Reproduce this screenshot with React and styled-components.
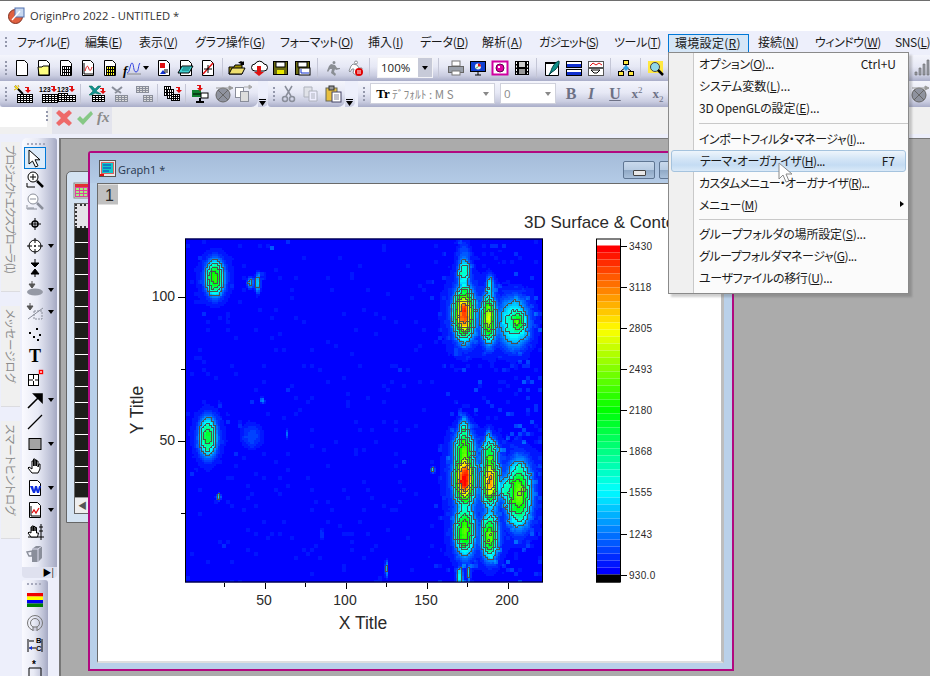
import React, {useMemo} from "react";
import styled, {createGlobalStyle} from "styled-components";

const GlobalStyle = createGlobalStyle`
  html, body { margin: 0; padding: 0; background: #ababab; }
  #root { width: 930px; height: 676px; overflow: hidden; }
  * { box-sizing: border-box; }
`;

const UI_FONT = `"Noto Sans CJK JP", "Noto Sans", sans-serif`;

/* ---------- small drawings ---------- */

const Doc = ({children}) => (
  <>
    <path d="M3.5 1.5h8l3 3v12h-11z" fill="#fff" stroke="#000" />
    {children}
  </>
);

const Grid = ({x, y, w, h, c = 4, r = 3, fill = "#fff", line = "#000"}) => {
  const cols = Array.from({length: c + 1}, (_, i) => `M${x + i * w + 0.5} ${y}v${r * h + 1}`);
  const rows = Array.from({length: r + 1}, (_, i) => `M${x} ${y + i * h + 0.5}h${c * w + 1}`);
  return (
    <>
      <rect x={x} y={y} width={c * w} height={r * h} fill={fill} />
      <path d={cols.concat(rows).join("")} stroke={line} fill="none" shapeRendering="crispEdges" />
    </>
  );
};

const RedArrow = ({x = 11, y = 1}) => (
  <path d={`M${x} ${y}h4v3h2l-3 3-3-3h2v-2h-2z`} fill="#e01010" />
);

const Floppy = ({children}) => (
  <>
    <rect x="1.5" y="2.5" width="14" height="13" fill="#6b6b10" stroke="#000" />
    <rect x="4" y="3" width="9" height="5" fill="#fff" stroke="#000" />
    {children}
  </>
);

const runner = "M10 2a1.5 1.5 0 1 1 0 3 1.5 1.5 0 1 1 0-3zM7 5l4 1 2 3 3 0v1l-4 1-1-1-1 3 2 2-1 2-4-3 1-4-2 0-2 3-1-1 2-5z";

const ICONS = {
  new: <Doc />,
  folderDoc: (
    <Doc>
      <path d="M3 8h4l1-1h6v9H4z" fill="#ffff80" stroke="#000" />
    </Doc>
  ),
  wks: (
    <Doc>
      <Grid x={5} y={7} w={2} h={3} c={4} r={3} fill="#fff" />
    </Doc>
  ),
  graphDoc: (
    <Doc>
      <path d="M5 4v11h9" stroke="#000" fill="none" />
      <path d="M6 12c2-7 3-5 4-2s2 1 3-2" stroke="#e01010" fill="none" />
    </Doc>
  ),
  matrix: (
    <Doc>
      <Grid x={5} y={7} w={2} h={3} c={4} r={3} fill="#ffff20" />
    </Doc>
  ),
  fx: (
    <>
      <path d="M4 14c3 0 3-10 5-10s1 9 4 9 2-7 4-9" stroke="#3040e0" fill="none" />
      <path d="M4 15h14" stroke="#888" />
      <text x="0" y="16" fontFamily="Liberation Serif" fontStyle="italic" fontWeight="700" fontSize="13">f</text>
    </>
  ),
  layout: (
    <Doc>
      <rect x="5" y="4" width="5" height="5" fill="#e01010" />
      <path d="M5 15l3-4 3 4z" fill="#1030d0" />
      <path d="M9 13h4M9 11h4" stroke="#000" />
    </Doc>
  ),
  notes: (
    <Doc>
      <path d="M1 14l4-7h11l-4 7z" fill="#40d0d0" stroke="#000" />
      <path d="M5 11h7M6 9h7" stroke="#107070" />
    </Doc>
  ),
  image: (
    <Doc>
      <path d="M4 15L14 4" stroke="#e01010" strokeWidth="1.5" />
      <path d="M9 6v8M5 10h8" stroke="#000" />
    </Doc>
  ),
  open: (
    <>
      <path d="M1 8h5l1-2h7v9H1z" fill="#a09000" stroke="#000" />
      <path d="M1 15l3-6h13l-3 6z" fill="#f0e070" stroke="#000" />
      <path d="M10 4c2-2 4-2 5-1l1-1v4h-4l1-1c-1-1-2-1-3-1z" fill="#000" />
    </>
  ),
  cloud: (
    <>
      <path d="M5 12a3.5 3.5 0 0 1 0-7 5 5 0 0 1 9 0 3.5 3.5 0 0 1 0 7z" fill="#fff" stroke="#000" />
      <path d="M7 7h4v6h3l-5 4-5-4h3z" fill="#e01010" />
    </>
  ),
  save: (
    <Floppy>
      <rect x="5" y="11" width="7" height="4" fill="#e8e800" />
    </Floppy>
  ),
  saveAs: (
    <Floppy>
      <rect x="5" y="9" width="11" height="7" fill="#fff" stroke="#000" />
      <path d="M7 10v4h8" stroke="#1030d0" fill="none" />
    </Floppy>
  ),
  run: <path d={runner} fill="#8a8e94" />,
  stop: (
    <>
      <path d={runner} fill="#fff" stroke="#8a8e94" />
      <circle cx="13" cy="13" r="4" fill="#e00000" />
      <path d="M12 11v4M14 11v4" stroke="#fff" />
    </>
  ),
  printer: (
    <>
      <rect x="5" y="2" width="8" height="5" fill="#fff" stroke="#777" />
      <rect x="1.5" y="7.5" width="15" height="6" fill="#9aa0aa" stroke="#666" />
      <rect x="5" y="12" width="8" height="4" fill="#fff" stroke="#777" />
    </>
  ),
  present: (
    <>
      <rect x="1.5" y="2.5" width="15" height="10" fill="#1040d0" stroke="#000" />
      <circle cx="9" cy="7.5" r="3" fill="#f0f0f0" />
      <path d="M9 7.5V4.5a3 3 0 0 1 3 3z" fill="#e01010" />
      <path d="M9 7.5l-2 2" stroke="#10a010" />
      <path d="M9 13v3M6 16h6" stroke="#000" />
    </>
  ),
  pink: (
    <>
      <rect x="1.5" y="2.5" width="15" height="13" fill="#fff" stroke="#d000a0" strokeWidth="2" />
      <circle cx="9" cy="9" r="4" fill="#e000a0" stroke="#600050" />
      <rect x="7" y="7" width="2" height="2" fill="#fff" />
    </>
  ),
  film: (
    <>
      <rect x="2" y="2" width="14" height="14" fill="#000" />
      <rect x="6" y="3" width="6" height="5" fill="#ccc" />
      <rect x="6" y="10" width="6" height="5" fill="#999" />
      <path d="M3.5 3v12M14.5 3v12" stroke="#fff" strokeDasharray="2 1.5" />
    </>
  ),
  pen: (
    <>
      <path d="M2.5 3.5h13v13h-13z" fill="#fff" stroke="#000" />
      <path d="M2 3h14v2H2z" fill="#000" />
      <path d="M16 2c1 4-3 9-7 11l-3 3 2-4C9 8 12 3 16 2z" fill="#10908a" stroke="#044" />
    </>
  ),
  bars: (
    <>
      <rect x="1.5" y="2.5" width="15" height="6" fill="#fff" stroke="#000" />
      <rect x="2" y="5" width="14" height="3" fill="#1030d0" />
      <rect x="1.5" y="10.5" width="15" height="6" fill="#fff" stroke="#000" />
      <rect x="2" y="13" width="14" height="3" fill="#1030d0" />
    </>
  ),
  graphs: (
    <>
      <rect x="1.5" y="2.5" width="15" height="6" fill="#fff" stroke="#555" />
      <path d="M3 7l3-3 3 2 3-2 3 2" stroke="#e01010" fill="none" />
      <rect x="1.5" y="9.5" width="15" height="7" fill="#fff" stroke="#555" />
      <path d="M4 11h9l-3 3H7z" fill="none" stroke="#000" />
    </>
  ),
  tree: (
    <>
      <path d="M9 5v3M4 12L9 8l5 4" stroke="#000" fill="none" />
      <rect x="6.5" y="1.5" width="5" height="4" fill="#ffe840" stroke="#000" />
      <path d="M9 6l3 3-3 3-3-3z" fill="#30a0e0" />
      <rect x="1.5" y="12.5" width="5" height="4" fill="#ffe840" stroke="#000" />
      <rect x="11.5" y="12.5" width="5" height="4" fill="#ffe840" stroke="#000" />
    </>
  ),
  magnify: (
    <>
      <rect x="1" y="2" width="15" height="12" fill="#ffe840" />
      <circle cx="8" cy="8" r="4.5" fill="#90d8e8" stroke="#444" />
      <path d="M11 11l5 5" stroke="#000" strokeWidth="2.5" />
    </>
  ),
  steps: (
    <path d="M2 16h2v-3H2zM6 16h2V9H6zM10 16h2V5h-2zM14 16h2V1h-2z" fill="#9a9ea8" stroke="#666" strokeWidth=".6" />
  ),
  wand: (
    <>
      <Grid x={3} y={9} w={3} h={2} c={5} r={4} fill="#fff" />
      <path d="M1 1l8 8" stroke="#000" strokeWidth="2" />
      <path d="M1 1l3 3" stroke="#ffe020" strokeWidth="2" />
      <path d="M4 0l1 2M0 5l2-1" stroke="#e0b000" />
      <RedArrow x={11} y={2} />
    </>
  ),
  num: (
    <>
      <text x="0" y="7" fontFamily="Liberation Sans" fontWeight="700" fontSize="7">123</text>
      <RedArrow x={12} y={1} />
      <Grid x={3} y={9} w={3} h={2} c={5} r={4} fill="#fff" />
    </>
  ),
  num2: (
    <>
      <text x="0" y="7" fontFamily="Liberation Sans" fontWeight="700" fontSize="7">123</text>
      <RedArrow x={12} y={1} />
      <Grid x={1} y={8} w={3} h={2} c={3} r={4} fill="#fff" />
      <Grid x={9} y={10} w={3} h={2} c={3} r={3} fill="#fff" />
    </>
  ),
  xTable: (
    <>
      <path d="M1 1h3l3 3 3-3h3L8 6l5 3h-3L7 8 4 10H1l4-4z" fill="#109090" stroke="#064" strokeWidth=".5" />
      <RedArrow x={12} y={3} />
      <Grid x={4} y={10} w={3} h={2} c={4} r={3} fill="#fff" />
    </>
  ),
  xTableGray: (
    <>
      <path d="M1 2l5 4 5-4M4 8l3-2 3 2" stroke="#8a8e9a" strokeWidth="2" fill="none" />
      <Grid x={4} y={10} w={3} h={2} c={4} r={3} fill="#ddd" line="#8a8e9a" />
    </>
  ),
  tableGray: (
    <>
      <Grid x={1} y={1} w={3} h={2} c={4} r={3} fill="#ddd" line="#8a8e9a" />
      <Grid x={8} y={10} w={3} h={2} c={3} r={3} fill="#ddd" line="#8a8e9a" />
    </>
  ),
  tables: (
    <>
      <Grid x={1} y={1} w={2} h={3} c={3} r={3} fill="#fff" />
      <Grid x={4} y={4} w={2} h={3} c={3} r={3} fill="#fff" />
      <Grid x={8} y={9} w={2} h={2} c={4} r={3} fill="#fff" />
      <RedArrow x={13} y={2} />
    </>
  ),
  plug: (
    <>
      <rect x="1" y="5" width="9" height="7" fill="#108030" />
      <rect x="10" y="8" width="7" height="5" fill="#fff" stroke="#000" />
      <path d="M2 9h8" stroke="#000" />
      <path d="M9 13v3M5 17h8" stroke="#000" strokeWidth="2" />
      <RedArrow x={6} y={0} />
    </>
  ),
  disc: (
    <>
      <circle cx="8" cy="10" r="7" fill="#8f939f" stroke="#666" />
      <path d="M3 5l10 10M13 5L3 15" stroke="#666" />
      <path d="M1 3h13M14 1l4 2-4 2z" fill="#999" stroke="#999" />
    </>
  ),
  copyGray: (
    <>
      <rect x="1.5" y="2.5" width="8" height="10" fill="#fff" stroke="#8a8e9a" />
      <rect x="6.5" y="6.5" width="8" height="10" fill="#ddd" stroke="#8a8e9a" />
      <path d="M10 2h5M15 0l3 2-3 2z" fill="#aaa" stroke="#aaa" />
    </>
  ),
  cut: (
    <>
      <path d="M5 1l6 10M12 1L6 11" stroke="#8a8e9a" strokeWidth="1.5" />
      <circle cx="5" cy="14" r="2.5" fill="none" stroke="#8a8e9a" strokeWidth="1.5" />
      <circle cx="12" cy="14" r="2.5" fill="none" stroke="#8a8e9a" strokeWidth="1.5" />
    </>
  ),
  copy: (
    <>
      <path d="M2 2h8v10H2z" fill="#e0e2e8" stroke="#aeb2bc" />
      <path d="M7 6h8v10H7z" fill="#eef" stroke="#aeb2bc" />
      <path d="M9 9h4M9 11h4M9 13h4" stroke="#aeb2bc" />
    </>
  ),
  paste: (
    <>
      <rect x="2" y="3" width="11" height="13" fill="#e8c040" stroke="#665" />
      <rect x="5" y="1" width="5" height="4" fill="#999" stroke="#333" />
      <rect x="8" y="7" width="9" height="10" fill="#fff" stroke="#446" />
      <path d="M10 10h5M10 12h5M10 14h5" stroke="#889" />
    </>
  ),
  cancel: <path d="M1 4l3-3 5 4 5-4 3 3-5 5 5 5-3 3-5-4-5 4-3-3 5-5z" fill="#ee6a6a" />,
  accept: <path d="M1 10l3-3 3 3 8-8 2 3-10 11z" fill="#86c886" />,
  pointer: <path d="M3 1v14l3.5-3 3 6 2.5-1.2-3-6H14z" fill="#fff" stroke="#000" />,
  zoomIn: (
    <>
      <circle cx="7" cy="6" r="5" fill="#fff" stroke="#000" />
      <path d="M4 6h6M7 3v6" stroke="#000" />
      <path d="M11 10l6 6" stroke="#000" strokeWidth="2.5" />
      <path d="M1 12v4h8" stroke="#000" fill="none" />
    </>
  ),
  zoomOut: (
    <>
      <circle cx="7" cy="6" r="5" fill="#fff" stroke="#8a8e9a" />
      <path d="M4 6h6" stroke="#8a8e9a" />
      <path d="M11 10l6 6" stroke="#8a8e9a" strokeWidth="2.5" />
      <path d="M1 12v4h10M3 14v2M5 14v2M7 14v2" stroke="#8a8e9a" fill="none" />
    </>
  ),
  cross: (
    <>
      <circle cx="9" cy="9" r="3" fill="none" stroke="#000" strokeWidth="1.5" />
      <path d="M9 3v12M3 9h12" stroke="#000" />
    </>
  ),
  target: (
    <>
      <circle cx="9" cy="9" r="6" fill="#fff" stroke="#000" />
      <circle cx="9" cy="9" r="1" fill="#000" />
      <path d="M9 1v5M9 12v5M1 9h5M12 9h5" stroke="#000" />
    </>
  ),
  pinch: <path d="M9 0v5M5 4h8l-4 4zM5 15h8L9 10zM9 15v3" fill="#000" stroke="#000" />,
  ellipse: (
    <>
      <path d="M6 0v6M3 3h6L6 7z" fill="#555" stroke="#555" />
      <ellipse cx="9" cy="11" rx="8" ry="3.5" fill="#9599a5" />
    </>
  ),
  ellipseLine: (
    <>
      <path d="M4 0v5M1 3h6L4 7z" fill="#555" stroke="#555" />
      <path d="M2 16L17 5" stroke="#8a8e9a" />
      <rect x="8" y="8" width="8" height="8" fill="none" stroke="#8a8e9a" strokeDasharray="2 1" />
    </>
  ),
  dots: <path d="M10 3h2v2h-2zM3 7h2v2H3zM13 9h2v2h-2zM7 11h2v2H7zM11 14h2v2h-2z" fill="#000" />,
  addBox: (
    <>
      <rect x="2.5" y="5.5" width="10" height="11" fill="#fff" stroke="#000" />
      <path d="M7.5 6v4M7.5 12v4M3 11h4M9 11h4" stroke="#000" />
      <rect x="13.5" y="1.5" width="3" height="3" fill="#fff" stroke="#f00" strokeWidth="1.4" />
    </>
  ),
  arrow: <path d="M2 17L14 5M8 3h8v8z" stroke="#000" strokeWidth="1.6" fill="#000" />,
  line: <path d="M2 16L16 2" stroke="#000" strokeWidth="1.3" />,
  rect: <rect x="3" y="3.5" width="12" height="11" fill="#a4a4a4" stroke="#000" />,
  hand: (
    <path d="M6 16l-4-5 1-1 3 2V4h1.5v5V2H9v7V3h1.5v6V4H12v6l1-3h1v5l-2 4z" fill="#fff" stroke="#000" strokeLinejoin="round" />
  ),
  wordDoc: (
    <Doc>
      <rect x="4" y="5" width="10" height="11" fill="#fff" />
      <path d="M4 7h3l1 4 1-4h2l1 4 1-4h2l-2 7h-2l-1-3-1 3H7z" fill="#1030e0" />
    </Doc>
  ),
  chartDoc: (
    <Doc>
      <path d="M5 5v10h9" stroke="#000" fill="none" />
      <path d="M6 12l2-3 2 3 3-5" stroke="#e01010" fill="none" strokeWidth="1.3" />
    </Doc>
  ),
  handGrid: (
    <>
      <path d="M15 1v16M2 14h16M13 4h4M13 8h4" stroke="#000" />
      <path d="M5 14l-3-4 1-1 2 1V4h1v4V3h1.5v5V3.500H9V8V4.500h1.500V10h2l-1 4z" fill="#fff" stroke="#000" />
    </>
  ),
  cube: (
    <>
      <path d="M6 4l4-3h6v12l-4 4H6z" fill="#8a8e9a" />
      <path d="M6 4h6v13M12 4l4-3" stroke="#dde" fill="none" />
      <path d="M1 7l5-1v5H3z" fill="none" stroke="#8a8e9a" strokeWidth="1.4" />
    </>
  ),
  colorBars: (
    <>
      <rect x="1" y="1" width="16" height="3.500" fill="#f00000" />
      <rect x="1" y="4.500" width="16" height="3.500" fill="#ffff00" />
      <rect x="1" y="8" width="16" height="3.500" fill="#0000f0" />
      <rect x="1" y="11.500" width="16" height="3.500" fill="#008000" />
    </>
  ),
  ring: (
    <>
      <circle cx="9" cy="9" r="7.500" fill="none" stroke="#777" />
      <circle cx="9" cy="9" r="4.500" fill="none" stroke="#777" />
      <path d="M7 17v-4h4v4" fill="#ccd" stroke="#777" />
    </>
  ),
  swap: (
    <>
      <path d="M2 3v13M16 3v13" stroke="#000" />
      <path d="M3 5h5M3 12h7" stroke="#000" />
      <text x="10" y="7" fontFamily="Liberation Sans" fontWeight="700" fontSize="7.500">B</text>
      <text x="10" y="15" fontFamily="Liberation Sans" fontWeight="700" fontSize="7.500">C</text>
      <path d="M3 12l3-2v4z" fill="#1030e0" />
    </>
  ),
  star: (
    <>
      <path d="M3 10h12M3 10v8M15 10v8" stroke="#000" fill="none" />
      <text x="6" y="10" fontFamily="Liberation Sans" fontWeight="700" fontSize="10">*</text>
    </>
  ),
  appLogo: (
    <>
      <circle cx="7.500" cy="9.500" r="7" fill="#e06040" stroke="#803020" />
      <rect x="7" y="1" width="9" height="9" fill="#c8d8f0" stroke="#5070b0" />
      <path d="M4 13L12 4" stroke="#fff" strokeWidth="1.400" />
    </>
  ),
  sheetLogo: (
    <>
      <rect x="0" y="1" width="18" height="15" fill="#e8f0e0" stroke="#888" />
      <rect x="1" y="2" width="16" height="3" fill="#e03030" />
      <Grid x={1} y={5} w={4} h={3} c={4} r={3} fill="#a0f080" line="#e040a0" />
    </>
  ),
  graphLogo: (
    <>
      <rect x="0.500" y="0.500" width="16" height="16" fill="#e8e8e8" stroke="#555" />
      <rect x="2.500" y="2.500" width="12" height="11" fill="#10c8c8" stroke="#e06060" />
      <path d="M4 5h8M4 8h8M4 11h6" stroke="#1030c0" />
      <rect x="1" y="14" width="4" height="2" fill="#e01010" />
    </>
  ),
};

const IconSvg = styled.svg`
  display: block;
  flex: none;
  width: 18px;
  height: 18px;
  overflow: visible;
`;

const Icon = ({name}) => <IconSvg viewBox="0 0 18 18">{ICONS[name]}</IconSvg>;

/* ---------- window chrome ---------- */

const Shell = styled.div`
  width: 930px;
  height: 676px;
  display: flex;
  flex-direction: column;
  border-top: 1px solid #6e6e6e;
  background: #edeffb;
  font-family: ${UI_FONT};
  font-size: 12px;
  font-feature-settings: "palt";
  color: #1a1a1a;
  position: relative;
  overflow: hidden;
`;

const TitleBar = styled.div`
  height: 30px;
  flex: none;
  display: flex;
  align-items: center;
  gap: 4px;
  padding: 0 0 1px 8px;
  background: #fff;
  font-family: "Open Sans", sans-serif;
  font-size: 11.200px;
  color: #333;
`;

const MenuBar = styled.div`
  height: 24px;
  flex: none;
  display: flex;
  align-items: center;
  background: #edeffb;
  padding-left: 5px;
`;

const Grip = styled.div`
  flex: none;
  width: 2px;
  height: ${(p) => p.$h || 14}px;
  margin-left: ${(p) => p.$ml ?? 0}px;
  margin-right: ${(p) => p.$mr ?? 0}px;
  margin-top: ${(p) => p.$mt ?? 0}px;
  background: repeating-linear-gradient(to bottom, #9498ac 0 2px, transparent 2px 4px);
`;

const GripRow = styled.div`
  width: ${(p) => p.$w || 20}px;
  height: 2px;
  margin: ${(p) => p.$m || "5px 0 2px 5px"};
  background: repeating-linear-gradient(to right, #a6a9bc 0 2px, transparent 2px 4px);
`;

const MenuItem = styled.div`
  flex: none;
  width: ${(p) => p.$w}px;
  height: ${(p) => (p.$active ? 19 : 24)}px;
  line-height: ${(p) => (p.$active ? 16 : 22)}px;
  padding-left: ${(p) => (p.$active ? 6 : 8)}px;
  white-space: nowrap;
  letter-spacing: ${(p) => p.$ls || 0}px;
  border: ${(p) => (p.$active ? "1px solid #0078d7" : "none")};
  background: ${(p) => (p.$active ? "#d5e6f7" : "transparent")};
  margin: ${(p) => (p.$active ? "0 1px" : "0")};
`;

const Bands = styled.div`
  height: ${(p) => p.$h}px;
  flex: none;
  display: flex;
  background: #edeffb;
  overflow: hidden;
`;

const Band = styled.div`
  flex: ${(p) => (p.$grow ? "1 1 0" : "none")};
  min-width: 0;
  display: flex;
  align-items: center;
  padding: 0 ${(p) => p.$pr ?? 0}px 1px ${(p) => p.$pl ?? 5}px;
  background: linear-gradient(to bottom, #f4f5fc 0%, #e6e8f5 45%, #c9cce0 80%, #a9adc8 100%);
  border-radius: 0 0 ${(p) => (p.$square ? 0 : 7)}px ${(p) => (p.$square ? 0 : 3)}px;
`;

const Chevron = styled.div`
  width: 10px;
  flex: none;
  position: relative;
  background: linear-gradient(to bottom, #edeffb 60%, #c6c9de 100%);
  border-radius: 0 0 5px 0;
  margin-right: ${(p) => p.$mr ?? 0}px;
  &::after {
    content: "";
    position: absolute;
    left: 1px;
    bottom: 1px;
    width: 7px;
    height: 6px;
    border-top: 1px solid #000;
    background: linear-gradient(to bottom, transparent 1px, #000 1px) no-repeat;
    clip-path: polygon(0 0, 100% 0, 100% 30%, 50% 100%, 0 30%);
  }
`;

const Tool = styled.div`
  flex: none;
  width: ${(p) => p.$w || 22}px;
  height: 24px;
  display: flex;
  align-items: center;
  justify-content: ${(p) => (p.$caret ? "flex-start" : "center")};
  padding-left: ${(p) => (p.$caret ? 2 : 0)}px;
  gap: 2px;
  margin-left: ${(p) => (p.$end ? "auto" : "0")};
  margin-right: ${(p) => p.$mr ?? 0}px;
`;

const Caret = styled.span`
  flex: none;
  width: 0;
  height: 0;
  border-left: 3.5px solid transparent;
  border-right: 3.5px solid transparent;
  border-top: 4px solid ${(p) => p.$color || "#000"};
`;

const Sep = styled.div`
  flex: none;
  width: ${(p) => p.$w || 8}px;
  height: 20px;
  position: relative;
  &::after {
    content: "";
    position: absolute;
    left: ${(p) => Math.floor(((p.$w || 8) - 1) / 2)}px;
    top: 0;
    bottom: 0;
    width: 1px;
    background: #c4c6d6;
  }
`;

const Combo = styled.div`
  flex: none;
  width: ${(p) => p.$w}px;
  height: 21px;
  margin: 0 ${(p) => p.$mr ?? 0}px 0 ${(p) => p.$ml ?? 0}px;
  display: flex;
  align-items: center;
  background: #fff;
  border: 1px solid ${(p) => (p.$flat ? "#f2f2f6" : "#cfd1dc")};
  color: ${(p) => (p.$dim ? "#8a8a8a" : "#222")};
  padding-left: 3px;
  font-family: ${(p) => (p.$cjk ? UI_FONT : `"Open Sans", sans-serif`)};
  font-size: 11.500px;
  white-space: nowrap;
  overflow: hidden;
`;

const ComboText = styled.span`
  flex: 1 1 0;
  min-width: 0;
  overflow: hidden;
`;

const ComboArrow = styled.span`
  flex: none;
  align-self: stretch;
  width: ${(p) => p.$w || 14}px;
  display: flex;
  align-items: center;
  justify-content: center;
  background: ${(p) => p.$bg || "transparent"};
`;

const Fmt = styled.span`
  flex: none;
  width: ${(p) => p.$w}px;
  margin-left: ${(p) => p.$ml ?? 0}px;
  text-align: center;
  font-family: "Liberation Serif", serif;
  font-size: ${(p) => p.$size || 15}px;
  font-weight: 700;
  font-style: ${(p) => (p.$italic ? "italic" : "normal")};
  text-decoration: ${(p) => (p.$under ? "underline" : "none")};
  color: ${(p) => p.$color || "#6d7185"};
  sup, sub { font-size: 9px; font-weight: 400; line-height: 0; }
`;

const FormulaRow = styled.div`
  height: 27px;
  flex: none;
  display: flex;
  align-items: flex-start;
  background: #f0f0f0;
`;

const FormulaInput = styled.div`
  width: 47px;
  height: 20px;
  background: #fff;
`;

const FormulaTools = styled.div`
  width: 60px;
  height: 27px;
  margin-left: 4px;
  display: flex;
  align-items: center;
  justify-content: space-around;
  padding: 0 1px 6px;
  background: #e3e4ed;
  font-family: "Liberation Serif", serif;
  font-style: italic;
  font-weight: 700;
  font-size: 15px;
  color: #8a8a8a;
`;

const Strip = styled.div`
  height: 4px;
  flex: none;
  background: #edeffb;
`;

const Body = styled.div`
  flex: 1 1 0;
  min-height: 0;
  display: flex;
`;

const TabColumn = styled.div`
  width: 22px;
  flex: none;
  display: flex;
  flex-direction: column;
  gap: 14px;
  padding: 4px 2px 0 1px;
`;

const DockTab = styled.div`
  height: ${(p) => p.$h}px;
  flex: none;
  background: #f0f0f0;
  border-bottom: 1px solid #dcdce0;
  color: #8c8c8c;
  font-size: 11.500px;
  line-height: 18px;
  letter-spacing: ${(p) => p.$ls || 0}px;
  padding-top: 3px;
  writing-mode: vertical-rl;
  text-orientation: sideways;
  white-space: nowrap;
`;

const ToolColumn = styled.div`
  width: 37px;
  flex: none;
  display: flex;
  flex-direction: column;
`;

const ToolPanel = styled.div`
  width: ${(p) => p.$w}px;
  background: linear-gradient(to right, #fafaff 0%, #e8eaf5 45%, #b9bdd3 85%, #a4a8c2 100%);
  border-radius: ${(p) => (p.$open ? "3px 3px 0 0" : "5px 3px 0 0")};
  padding-bottom: ${(p) => (p.$open ? 0 : 2)}px;
  flex: ${(p) => (p.$open ? "1 1 0" : "none")};
  overflow: hidden;
`;

const ToolRow = styled.div`
  height: 22px;
  display: flex;
  align-items: center;
  padding-left: 4px;
  gap: 4px;
`;

const Selected = styled.div`
  width: 22px;
  height: 22px;
  margin-left: -2px;
  display: flex;
  align-items: center;
  justify-content: center;
  background: #dcebfa;
  border: 1px solid #0078d7;
`;

const Expander = styled.div`
  width: 35px;
  height: 11px;
  margin-bottom: 2px;
  display: flex;
  align-items: center;
  justify-content: flex-end;
  padding-right: 3px;
  background: #dfe1ef;
  border-radius: 0 0 4px 4px;
  font-size: 9px;
  line-height: 1;
  color: #000;
`;

const Desktop = styled.div`
  flex: 1 1 0;
  position: relative;
  background: #ababab;
  border-top: 1px solid #777;
  border-left: 2px solid #777;
  overflow: hidden;
`;

const SheetWindow = styled.div`
  position: absolute;
  left: 5px;
  top: 32px;
  width: 110px;
  height: 352px;
  background: #d4e3f2;
  border: 1px solid #666;
  border-radius: 5px 0 0 0;
  padding: 10px 0 8px 7px;
  display: flex;
  flex-direction: column;
`;

const SheetGrid = styled.div`
  flex: 1 1 0;
  margin-top: 3px;
  border: 1px solid #666;
  background: repeating-linear-gradient(to bottom, #1e1e1a 0 15px, #fff 15px 16px);
  background-position: 0 7px;
  display: flex;
  flex-direction: column;
  justify-content: space-between;
`;

const SheetCorner = styled.div`
  height: 24px;
  background: #e4e4e8;
  border: 2px dotted #333;
`;

const SheetScroll = styled.div`
  height: 16px;
  background: #eee;
  color: #555;
  font-size: 9px;
  line-height: 16px;
  padding-left: 3px;
  border-top: 1px solid #999;
`;

const GraphWindow = styled.div`
  position: absolute;
  left: 27px;
  top: 12px;
  width: 646px;
  height: 520px;
  display: flex;
  flex-direction: column;
  background: #b9d0e9;
  border: 2px solid #b1087f;
  border-radius: 3px 0 0 0;
  padding: 0 8px 6px 7px;
`;

const GraphTitle = styled.div`
  height: 30px;
  flex: none;
  margin: 0 -8px 0 -7px;
  padding: 2px 0 0 9px;
  display: flex;
  align-items: center;
  gap: 1px;
  background: linear-gradient(to bottom, #a5bcd9 0%, #b4cbe6 100%);
  font-family: "Open Sans", sans-serif;
  font-size: 11px;
  color: #26364d;
  position: relative;
`;

const CaptionButton = styled.div`
  position: absolute;
  left: ${(p) => p.$left}px;
  top: 8px;
  width: 32px;
  height: 18px;
  border: 1px solid #5f7693;
  border-radius: 2px;
  background: linear-gradient(to bottom, #c9d9ec 0%, #b7cbe2 50%, #90a9c6 52%, #a9c0da 100%);
  &::after {
    content: "";
    position: absolute;
    left: 9px;
    top: 8px;
    width: 11px;
    height: 4px;
    background: #e8e8e8;
    border: 1px solid #444;
    border-radius: 1px;
  }
`;

const GraphClient = styled.div`
  flex: 1 1 0;
  min-height: 0;
  background: #fff;
  border-left: 1px solid #6a6a6a;
  border-top: 1px solid #6a6a6a;
  border-right: 3px solid #bdbdbd;
  border-bottom: 2px solid #dedede;
`;

const PageSvg = styled.svg`
  display: block;
  width: 100%;
  height: 100%;
  font-family: "Liberation Sans", sans-serif;
  fill: #2a2a2a;
`;

/* ---------- the open menu ---------- */

const Menu = styled.div`
  position: absolute;
  left: 668px;
  top: 51px;
  width: 241px;
  padding: 0 0 4px;
  background: linear-gradient(to right, #f0f0f0 0 24px, #c9c9c9 24px 25px, #fbfbfb 25px);
  border: 1px solid #8a8a8a;
  box-shadow: 3px 3px 2px rgba(60, 60, 60, 0.25);
`;

const Row = styled.div`
  height: 22px;
  display: flex;
  align-items: center;
  justify-content: space-between;
  padding: 0 12px 2px 30px;
  white-space: nowrap;
  position: relative;
  letter-spacing: ${(p) => p.$ls || 0}px;
  ${(p) =>
    p.$hot &&
    `
    margin: 0 2px;
    padding: 0 10px 2px 28px;
    border: 1px solid #a5c3de;
    border-radius: 3px;
    background: linear-gradient(to bottom, #eef5fc 0%, #d3e5f6 40%, #c4dcf3 70%, #d9e9f8 100%);
  `}
`;

const Shortcut = styled.span`
  letter-spacing: 0;
`;

const RowSep = styled.div`
  height: ${(p) => p.$h}px;
  margin-left: 30px;
  display: flex;
  align-items: center;
  &::after {
    content: "";
    flex: 1;
    height: 1px;
    background: #c9c9c9;
  }
`;

const SubArrow = styled.span`
  position: absolute;
  right: 4px;
  top: 7px;
  width: 0;
  height: 0;
  border-top: 3.500px solid transparent;
  border-bottom: 3.500px solid transparent;
  border-left: 4px solid #000;
`;

const Cursor = styled.svg`
  position: absolute;
  left: 778px;
  top: 160px;
  width: 16px;
  height: 24px;
`;

const Mn = ({t, k, tail = ""}) => (
  <span>
    {t}(<u>{k}</u>){tail}
  </span>
);

/* ---------- chart data ---------- */

const PEAKS = [
  [215, 277, 6.5, 12.5, 1350],
  [258, 282, 1.8, 7, 600],
  [250.5, 282, 2.5, 4, 480],
  [464.5, 313, 7, 17, 2350],
  [464, 272, 4.5, 11, 750],
  [489, 318, 5.2, 16, 1700],
  [490, 285, 2.8, 8, 600],
  [514, 322, 11, 18, 800],
  [519, 321, 5, 8, 1050],
  [208, 436, 6.5, 14, 1100],
  [252, 435, 8, 9, 180],
  [465, 478, 7, 18, 2500],
  [464.5, 448, 7, 12, 1300],
  [464, 430, 4, 9, 750],
  [465, 530, 7, 17, 1450],
  [490.5, 480, 5.8, 17, 2100],
  [490, 452, 5.5, 10, 1050],
  [488.5, 436, 2.2, 6, 500],
  [490, 535, 6, 16, 1400],
  [519, 493, 8.5, 22, 1500],
  [505, 488, 4, 9, 650],
  [460, 576, 2.3, 7, 650],
  [469, 572, 1.3, 6, 550],
  [219, 496, 1.5, 2.5, 560],
  [433, 469, 1.5, 2, 600],
  [386.5, 568, 1, 6, 500],
  [322, 533, 1, 5, 200],
  [262, 399, 1, 2, 500],
  [272, 247, 1.2, 1.2, 450],
  [287, 433, 1, 3, 300],
  [464, 255, 5, 12, 200],
];

const BANDS = 47;
const LEVELS = [1350, 1630, 1910, 2190, 2470, 2750, 3030];

function bandColor(i) {
  const s = (i / (BANDS - 1)) * 4;
  const ramp = (v) => Math.round(Math.max(0, Math.min(1, v)) * 255);
  if (s < 1) return `rgb(0,${ramp(s)},255)`;
  if (s < 2) return `rgb(0,255,${ramp(2 - s)})`;
  if (s < 3) return `rgb(${ramp(s - 2)},255,0)`;
  return `rgb(255,${ramp(4 - s)},0)`;
}

// seeded so the picture is the same on every load
function rng(seed) {
  let a = seed;
  return () => {
    a = (a + 0x6d2b79f5) | 0;
    let t = Math.imul(a ^ (a >>> 15), 1 | a);
    t = (t + Math.imul(t ^ (t >>> 7), 61 | t)) ^ t;
    return ((t ^ (t >>> 14)) >>> 0) / 4294967296;
  };
}

function buildHeatmap() {
  const X0 = 186;
  const Y0 = 239;
  const STEP = 2;
  const nx = 178;
  const ny = 171;
  const rand = rng(20220);
  const blocks = Array.from({length: (ny >> 1) + 2}, () =>
    Array.from({length: (nx >> 1) + 2}, () => rand())
  );
  const field = [];
  for (let j = 0; j < ny; j++) {
    const row = [];
    for (let i = 0; i < nx; i++) {
      const x = X0 + i * STEP + 1;
      const y = Y0 + j * STEP + 1;
      const n = blocks[j >> 1][i >> 1];
      let peak = 0;
      for (const [cx, cy, sx, sy, amp] of PEAKS) {
        const dx = x - cx;
        const dy = y - cy;
        // slightly flat-topped, the measured spots are not pure gaussians
        const r2 = dx * dx / (sx * sx) + dy * dy / (sy * sy);
        const v = amp * Math.exp(-0.5 * Math.pow(r2, 1.2));
        const halo = amp * 0.13 * Math.exp(-0.5 * (dx * dx / (sx * sx * 3.2) + dy * dy / (sy * sy * 2)));
        peak += v * v + halo * halo;
      }
      peak = Math.sqrt(peak);
      const side = x > 440 ? Math.min(1, (x - 440) / 20) : 0;
      const speck = Math.pow(n, 20) * 100 + side * Math.pow(n, 8) * 110;
      row.push(940 + speck + peak * (0.96 + n * 0.08));
    }
    field.push(row);
  }

  const fills = Array.from({length: BANDS}, () => "");
  for (let j = 0; j < ny; j++) {
    let i = 0;
    while (i < nx) {
      const b = Math.max(0, Math.min(BANDS - 1, Math.floor(((field[j][i] - 930) / 2500) * BANDS)));
      let end = i + 1;
      while (end < nx && Math.floor(((field[j][end] - 930) / 2500) * BANDS) === b) end++;
      fills[b] += `M${X0 + i * STEP} ${Y0 + j * STEP}h${(end - i) * STEP}v${STEP}h-${(end - i) * STEP}z`;
      i = end;
    }
  }

  let contour = "";
  for (const level of LEVELS) {
    for (let j = 0; j < ny; j++) {
      for (let i = 0; i < nx; i++) {
        const on = field[j][i] >= level;
        if (i + 1 < nx && on !== field[j][i + 1] >= level) {
          contour += `M${X0 + (i + 1) * STEP - 0.5} ${Y0 + j * STEP}v${STEP}`;
        }
        if (j + 1 < ny && on !== field[j + 1][i] >= level) {
          contour += `M${X0 + i * STEP} ${Y0 + (j + 1) * STEP - 0.5}h${STEP}`;
        }
      }
    }
  }
  return {fills, contour};
}

const X_MAJOR = [[265, "50"], [346, "100"], [427, "150"], [508, "200"]];
const X_MINOR = [224.5, 305.5, 386.5, 467.5];
const LEGEND = [
  [245, "3430"], [286, "3118"], [327, "2805"], [368, "2493"], [409, "2180"],
  [450, "1868"], [491, "1555"], [533, "1243"], [574, "930.0"],
];

function GraphPage() {
  const {fills, contour} = useMemo(buildHeatmap, []);
  return (
    <PageSvg viewBox="98 184 623 476">
      <rect x="98" y="184" width="20" height="20" fill="#c0c0c0" />
      <text x="105" y="200" fontSize="16">1</text>
      <text x="524" y="227" fontSize="17">3D Surface &amp; Contour</text>

      <rect x="185" y="238" width="358" height="344" fill="#0000ff" />
      {fills.map((d, i) =>
        d ? <path key={i} d={d} fill={bandColor(i)} shapeRendering="crispEdges" /> : null
      )}
      <path d={contour} stroke="#505050" strokeWidth="1" fill="none" shapeRendering="crispEdges" />
      <rect x="185.500" y="238.500" width="357" height="343" fill="none" stroke="#000" />

      <path
        d={`M178 296.500h7M181 368.500h4M178 440.500h7M181 512.500h4${X_MAJOR.map(([x]) => `M${x + 0.5} 582v6`).join("")}${X_MINOR.map((x) => `M${Math.floor(x) + 0.5} 582v4`).join("")}`}
        stroke="#000"
        shapeRendering="crispEdges"
      />
      <text x="175" y="300" fontSize="14" textAnchor="end">100</text>
      <text x="175" y="444" fontSize="14" textAnchor="end">50</text>
      {X_MAJOR.map(([x, label]) => (
        <text key={label} x={x - 1} y="604" fontSize="14" textAnchor="middle">{label}</text>
      ))}
      <text x="363" y="628" fontSize="17.500" textAnchor="middle">X Title</text>
      <text x="143" y="409.500" fontSize="17.500" textAnchor="middle" transform="rotate(-90 143 409.500)">Y Title</text>

      <rect x="596" y="238" width="24" height="7" fill="#fff" />
      {Array.from({length: BANDS}, (_, i) => (
        <rect key={i} x="596" y={245 + i * 7} width="24" height="7" fill={bandColor(BANDS - 1 - i)} />
      ))}
      <rect x="596" y="574" width="24" height="8" fill="#000" />
      <rect x="596.500" y="238.500" width="24" height="343" fill="none" stroke="#000" />
      {LEGEND.map(([y, label]) => (
        <g key={label}>
          <path d={`M621 ${y + 0.5}h6`} stroke="#000" shapeRendering="crispEdges" />
          <text x="629" y={y + 4} fontSize="10" letterSpacing=".3">{label}</text>
        </g>
      ))}
    </PageSvg>
  );
}

/* ---------- page data ---------- */

const MENUS = [
  ["ファイル", "F", 68, -0.5], ["編集", "E", 54, -0.4], ["表示", "V", 56, 0], ["グラフ操作", "G", 85, -0.2],
  ["フォーマット", "O", 88, -0.5], ["挿入", "I", 52, 0], ["データ", "D", 62, -0.3], ["解析", "A", 57, 0.3],
  ["ガジェット", "S", 75, -1], ["ツール", "T", 61, -0.4], ["環境設定", "R", 81, 0.3], ["接続", "N", 57, 0],
  ["ウィンドウ", "W", 80, -0.5], ["SNS", "L", 60, -0.4],
];

const RIGHT_TOOLS = ["pointer", "zoomIn", "zoomOut", "cross", "target", "pinch", "ellipse", "ellipseLine", "dots"];
const CARET_TOOLS = ["target", "ellipse", "ellipseLine", "arrow", "rect", "wordDoc", "chartDoc"];
const LOWER_TOOLS = ["addBox", "arrow", "line", "rect", "hand", "wordDoc", "chartDoc", "handGrid", "cube"];

const Tools = ({names}) => names.map((n) => <Tool key={n}><Icon name={n} /></Tool>);

export default function App() {
  return (
    <>
      <GlobalStyle />
      <Shell>
        <TitleBar>
          <Icon name="appLogo" />
          OriginPro 2022 - UNTITLED *
        </TitleBar>

        <MenuBar>
          <Grip $h={12} $mr={2} />
          {MENUS.map(([t, k, w, ls], i) => (
            <MenuItem key={k} $w={w} $ls={ls} $active={i === 10}>
              {t}(<u>{k}</u>)
            </MenuItem>
          ))}
        </MenuBar>

        <Bands $h={26}>
          <Band $grow $square>
            <Grip $mr={4} />
            <Tools names={["new", "folderDoc", "wks", "graphDoc", "matrix"]} />
            <Tool $w={32} $caret>
              <Icon name="fx" />
              <Caret />
            </Tool>
            <Tools names={["layout", "notes", "image"]} />
            <Sep $w={7} />
            <Tools names={["open", "cloud", "save", "saveAs"]} />
            <Sep />
            <Tools names={["run", "stop"]} />
            <Sep />
            <Combo $w={56} $ml={3} $flat>
              <ComboText>100%</ComboText>
              <ComboArrow $bg="#c7cad8">
                <Caret />
              </ComboArrow>
            </Combo>
            <Sep $w={11} />
            <Tool $w={23}><Icon name="printer" /></Tool>
            <Tools names={["present", "pink", "film"]} />
            <Sep />
            <Tools names={["pen", "bars", "graphs"]} />
            <Sep />
            <Tool><Icon name="tree" /></Tool>
            <Sep />
            <Tool><Icon name="magnify" /></Tool>
            <Tool $end $mr={-3}><Icon name="steps" /></Tool>
          </Band>
        </Bands>

        <Bands $h={26}>
          <Band $pr={9}>
            <Grip />
            <Tool $w={31}><Icon name="wand" /></Tool>
            <Tool $w={20}><Icon name="num" /></Tool>
            <Tool $w={16}><Icon name="num2" /></Tool>
            <Sep $w={14} />
            <Tool $w={18}><Icon name="xTable" /></Tool>
            <Tool $w={27}><Icon name="xTableGray" /></Tool>
            <Tool><Icon name="tableGray" /></Tool>
            <Sep $w={6} />
            <Tool><Icon name="tables" /></Tool>
            <Sep $w={6} />
            <Tool><Icon name="plug" /></Tool>
            <Tool $w={26}><Icon name="disc" /></Tool>
            <Tool $w={12}><Icon name="copyGray" /></Tool>
          </Band>
          <Chevron />
          <Band $pr={1}>
            <Grip $mr={3} />
            <Tools names={["cut", "copy", "paste"]} />
          </Band>
          <Chevron $mr={3} />
          <Band $grow $square>
            <Grip />
            <Combo $w={125} $ml={5} $cjk $dim>
              <Fmt $w={18} $size={13} $color="#000">Tr</Fmt>
              <ComboText>ﾃﾞﾌｫﾙﾄ : M S</ComboText>
              <ComboArrow $w={16}><Caret $color="#888" /></ComboArrow>
            </Combo>
            <Combo $w={56} $ml={5} $dim>
              <ComboText>0</ComboText>
              <ComboArrow><Caret $color="#888" /></ComboArrow>
            </Combo>
            <Fmt $w={22} $size={16} $ml={4}>B</Fmt>
            <Fmt $w={18} $size={16} $italic>I</Fmt>
            <Fmt $w={30} $size={16} $under>U</Fmt>
            <Fmt $w={14} $size={13}>x<sup>2</sup></Fmt>
            <Fmt $w={28} $size={13}>x<sub>2</sub></Fmt>
            <Tool $end $mr={-1}><Icon name="disc" /></Tool>
          </Band>
        </Bands>

        <FormulaRow>
          <FormulaInput />
          <Grip $h={12} $ml={-1} $mt={4} />
          <FormulaTools>
            <Icon name="cancel" />
            <Icon name="accept" />
            <span>fx</span>
          </FormulaTools>
        </FormulaRow>
        <Strip />

        <Body>
          <TabColumn>
            <DockTab $h={150} $ls={-1.5}>プロジェクトエクスプローラ (1)</DockTab>
            <DockTab $h={101}>メッセージログ</DockTab>
            <DockTab $h={118}>スマートヒントログ</DockTab>
          </TabColumn>

          <ToolColumn>
            <ToolPanel $w={35}>
              <GripRow />
              {RIGHT_TOOLS.map((n, i) => (
                <ToolRow key={n}>
                  {i === 0 ? <Selected><Icon name={n} /></Selected> : <Icon name={n} />}
                  {CARET_TOOLS.includes(n) && <Caret />}
                </ToolRow>
              ))}
              <ToolRow>
                <Fmt $w={18} $size={18} $color="#000">T</Fmt>
              </ToolRow>
              {LOWER_TOOLS.map((n) => (
                <ToolRow key={n}>
                  <Icon name={n} />
                  {CARET_TOOLS.includes(n) && <Caret />}
                </ToolRow>
              ))}
            </ToolPanel>
            <Expander>▶|</Expander>
            <ToolPanel $w={26} $open>
              <GripRow $w={16} $m="3px 0 5px 5px" />
              {["colorBars", "ring", "swap", "star"].map((n) => (
                <ToolRow key={n}><Icon name={n} /></ToolRow>
              ))}
            </ToolPanel>
          </ToolColumn>

          <Desktop>
            <SheetWindow>
              <Icon name="sheetLogo" />
              <SheetGrid>
                <SheetCorner />
                <SheetScroll>◀</SheetScroll>
              </SheetGrid>
            </SheetWindow>

            <GraphWindow>
              <GraphTitle>
                <Icon name="graphLogo" />
                Graph1 *
                <CaptionButton $left={533} />
                <CaptionButton $left={569} />
              </GraphTitle>
              <GraphClient>
                <GraphPage />
              </GraphClient>
            </GraphWindow>
          </Desktop>
        </Body>

        <Menu>
          <Row $ls={-0.45}><Mn t="オプション" k="O" tail="..." /><Shortcut>Ctrl+U</Shortcut></Row>
          <Row $ls={-0.1}><Mn t="システム変数" k="L" tail="..." /></Row>
          <Row $ls={-0.17}><Mn t="3D OpenGLの設定" k="E" tail="..." /></Row>
          <RowSep $h={9} />
          <Row $ls={-0.55}><Mn t="インポートフィルタ・マネージャ" k="I" tail="..." /></Row>
          <Row $hot $ls={-0.6}><Mn t="テーマ・オーガナイザ" k="H" tail="..." /><Shortcut>F7</Shortcut></Row>
          <Row $ls={-0.8}><Mn t="カスタムメニュー・オーガナイザ" k="R" tail="..." /></Row>
          <Row $ls={-0.4}><Mn t="メニュー" k="M" /><SubArrow /></Row>
          <RowSep $h={7} />
          <Row $ls={-0.2}><Mn t="グループフォルダの場所設定" k="S" tail="..." /></Row>
          <Row $ls={-0.5}><Mn t="グループフォルダマネージャ" k="G" tail="..." /></Row>
          <Row $ls={-0.35}><Mn t="ユーザファイルの移行" k="U" tail="..." /></Row>
        </Menu>

        <Cursor viewBox="0 0 16 24">
          <path d="M1 2v16l4-4 3 7 3-1-3-7h6z" fill="#fff" stroke="#8a8a8a" />
        </Cursor>
      </Shell>
    </>
  );
}
